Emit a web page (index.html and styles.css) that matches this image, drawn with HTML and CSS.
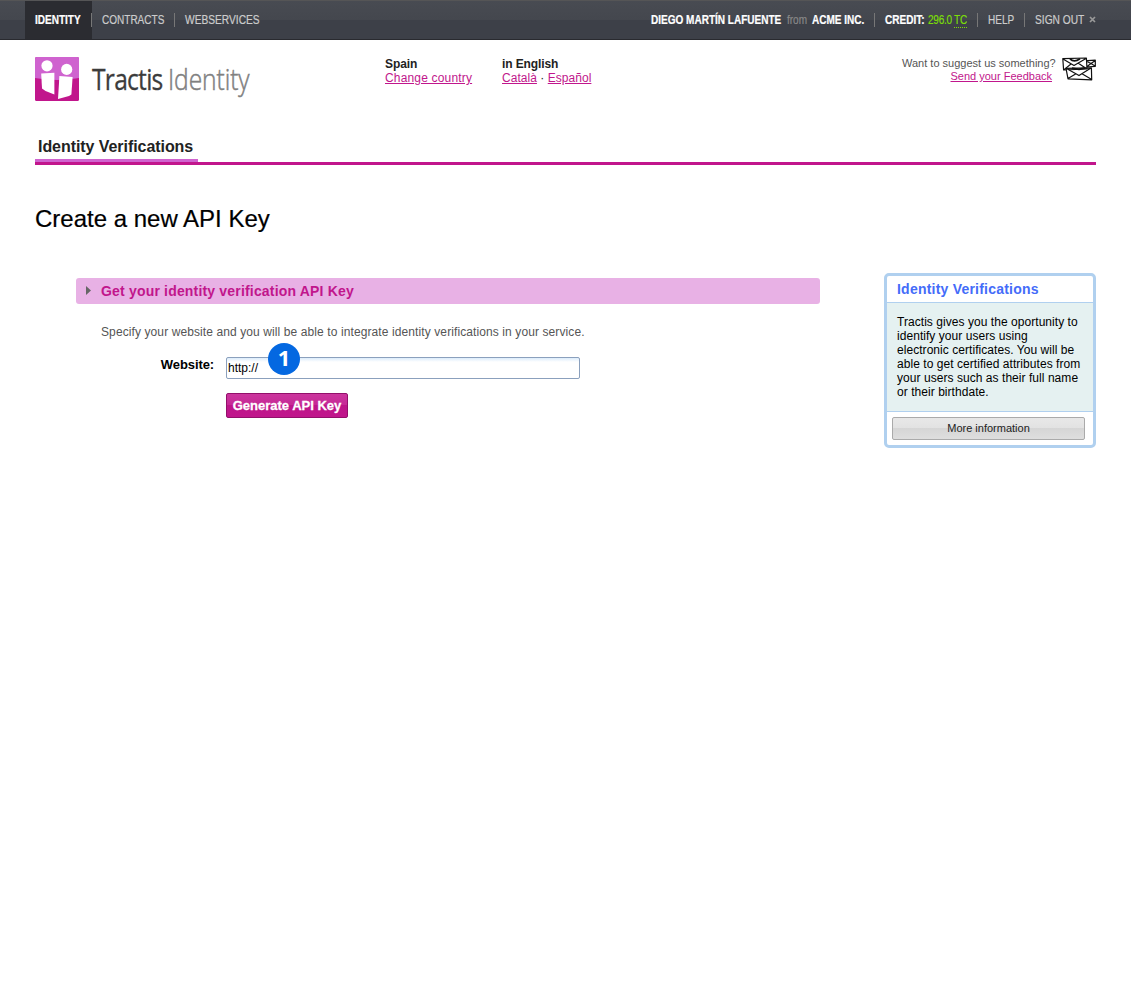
FILE: index.html
```html
<!DOCTYPE html>
<html lang="en">
<head>
<meta charset="utf-8">
<title>Tractis Identity</title>
<link rel="stylesheet" href="styles.css">
</head>
<body>
<div class="topbar">
  <nav class="nav">
    <a class="nav-item active"><span class="narrow">IDENTITY</span></a>
    <a class="nav-item contracts"><span class="narrow">CONTRACTS</span></a>
    <a class="nav-item webservices"><span class="narrow">WEBSERVICES</span></a>
  </nav>
  <div class="account">
    <span class="account-item user"><span class="name"><b class="narrow">DIEGO MARTÍN LAFUENTE</b></span><span class="from"><span class="narrow">from</span></span><b class="narrow">ACME INC.</b></span>
    <span class="account-item credit"><span class="credit-label"><b class="narrow">CREDIT:</b></span><span class="amount"><span class="narrow">296.0</span></span><span class="unit"><span class="narrow">TC</span></span></span>
    <span class="account-item help"><span class="narrow">HELP</span></span>
    <span class="account-item signout"><span class="signout-label"><span class="narrow">SIGN OUT</span></span><svg class="close" viewBox="0 0 7 7"><path d="M1 1L6 6M6 1L1 6"/></svg></span>
  </div>
</div>
<header class="header">
  <div class="brand">
    <svg class="logo" viewBox="0 0 44 44">
      <defs><clipPath id="tile"><rect width="44" height="44" rx="1.5"/></clipPath></defs>
      <g clip-path="url(#tile)">
        <rect width="44" height="44" fill="#c1168c"/>
        <path d="M0 0H44V21Q22 25 0 21Z" fill="#cf63cf"/>
      </g>
      <g fill="#fff">
        <circle cx="12" cy="8.8" r="5.6"/><circle cx="31.7" cy="12.4" r="5.6"/>
        <path d="M6.2 16.4L19.4 15.8V37.4L10.5 34L7 31.5Z"/>
        <path d="M24.4 19L37.6 20L36.4 37.6L34 39L23 42Z"/>
      </g>
    </svg>
    <div class="wordmark"><span class="word-dark">Tractis</span><span class="word-light">Identity</span></div>
  </div>
  <div class="locale country"><b>Spain</b><a>Change country</a></div>
  <div class="locale language"><b>in English</b><span><a>Català</a> · <a>Español</a></span></div>
  <div class="feedback"><span class="ask">Want to suggest us something?</span><a>Send your Feedback</a></div>
  <svg class="mail" viewBox="0 0 34 24" fill="#fff" stroke="#111" stroke-width="1.2" stroke-linejoin="round">
    <path d="M22 3.8L33.3 3.2V9.3L24 10ZM25 4.5L29 6.5L33 3.7M25 9.5L29 6.5L33 9"/>
    <path d="M.8 1.7L24.4 1L25 12L1.6 13ZM1 2L12 8.5L24 1.5M2 12.6L9 7M25 12L16 6"/>
    <path d="M8 1.8Q12 6 18 1.8" fill="none" stroke-width="1.8"/>
    <path d="M4 11.3L29.4 10.8L29.7 22.8L6 21.8ZM4.5 11.6L17 18.6L29 11M6 21.6L14 16.8M29.3 22.3L20 16.8"/>
    <path d="M10 11.2L17 12.4L23 11" fill="none" stroke-width="1.8"/>
  </svg>
</header>
<div class="tabs"><div class="tab">Identity Verifications</div></div>
<h1 class="title">Create a new API Key</h1>
<main class="content">
  <section class="main">
    <h2 class="section-title"><svg class="arrow" viewBox="0 0 5 9"><path d="M0 0L5 4.5L0 9Z"/></svg><span>Get your identity verification API Key</span></h2>
    <p class="intro">Specify your website and you will be able to integrate identity verifications in your service.</p>
    <form class="form">
      <label class="label" for="website">Website:</label>
      <div class="field">
        <input class="input" id="website" type="text" value="http://">
        <span class="marker">1</span>
      </div>
      <button class="generate" type="button">Generate API Key</button>
    </form>
  </section>
  <aside class="panel">
    <h3 class="panel-title">Identity Verifications</h3>
    <p class="panel-text">Tractis gives you the oportunity to<br>identify your users using<br>electronic certificates. You will be<br>able to get certified attributes from<br>your users such as their full name<br>or their birthdate.</p>
    <div class="panel-foot"><button class="more" type="button">More information</button></div>
  </aside>
</main>
</body>
</html>
```
FILE: styles.css
```css
* { box-sizing: border-box; }
body { margin: 0; background: #fff; color: #000; font: 12px/14px "Liberation Sans", Arial, sans-serif; }
h1, h2, h3, p { margin: 0; }
b { white-space: nowrap; }

.topbar { display: flex; justify-content: space-between; height: 40px; padding: 0 35px 0 25px; border-top: 1px solid #555556; border-bottom: 1px solid #292a2f; background: linear-gradient(#484b52 0, #44474e 19px, #3d4048 19px, #3d4048 100%); color: #ccc; font-size: 12px; line-height: 38px; white-space: nowrap; }
.narrow { display: inline-block; transform: scaleX(.835); transform-origin: 0 50%; -webkit-text-stroke: .2px; }
.nav, .account, .account-item { display: flex; }
.nav-item { padding-left: 10px; }
.active { width: 67px; background: #2b2c31 linear-gradient(#777, #777) right 12px / 1px 14px no-repeat; color: #fff; font-weight: bold; }
.contracts { width: 83px; background: linear-gradient(#777, #777) right 12px / 1px 14px no-repeat; }
.webservices .narrow { transform: scaleX(.85); }
.account-item { background: linear-gradient(#777, #777) right 12px / 1px 14px no-repeat; }
.account b { color: #fff; }
.user { width: 224px; }
.name { width: 136px; }
.from { width: 25px; color: #888; }
.credit { width: 103px; padding-left: 10px; color: #7bdc08; }
.credit-label { width: 43px; }
.amount { width: 26px; letter-spacing: -.3px; }
.unit { width: 13px; height: 15px; margin-top: 12px; border-bottom: 1px dotted #7bdc08; line-height: 15px; }
.help { width: 47px; padding-left: 10px; }
.signout { width: 71px; padding-left: 10px; background: none; align-items: center; }
.signout-label { width: 54px; }
.signout-label .narrow { transform: scaleX(.85); }
.close { flex: none; width: 7px; height: 7px; margin-top: -1px; stroke: #999; stroke-width: 1.7; }

.header { display: flex; height: 84px; padding: 17px 35px 0; line-height: 14px; }
.header a { color: #c1168c; text-decoration: underline; }
.brand { display: flex; width: 350px; }
.logo { width: 44px; height: 44px; }
.wordmark { display: flex; margin-left: 13px; font: 30px/44px "Open Sans", sans-serif; white-space: nowrap; }
.word-dark, .word-light { transform: scaleX(.82); transform-origin: 0 50%; }
.word-dark { width: 76px; color: #3c3c3c; letter-spacing: -.9px; -webkit-text-stroke: .3px; }
.word-light { color: #808080; font-weight: 300; letter-spacing: -.1px; -webkit-text-stroke: .5px; }
.locale { display: flex; flex-direction: column; color: #222; letter-spacing: .12px; }
.locale b { letter-spacing: -.1px; }
.country { width: 117px; }
.country a { letter-spacing: .17px; }
.language { width: 200px; letter-spacing: .04px; }
.feedback { display: flex; flex-direction: column; width: 153px; margin-left: auto; color: #555; font-size: 11px; line-height: 13px; white-space: nowrap; }
.feedback a { margin-right: 3px; text-align: right; }
.mail { width: 34px; height: 24px; margin-left: 7px; }

.tabs { display: flex; height: 41px; margin: 0 35px; border-bottom: 3px solid #c1168c; }
.tab { width: 163px; padding: 13px 0 0 3px; border-bottom: 3px solid #cf63cf; color: #222; font-size: 16px; line-height: 20px; font-weight: bold; white-space: nowrap; letter-spacing: -.06px; }
.title { margin: 39px 35px 0; font-size: 24px; line-height: 29px; font-weight: normal; -webkit-text-stroke: .2px; }

.content { display: flex; justify-content: space-between; align-items: flex-start; margin: 40px 35px 0 76px; }
.main { width: 744px; padding-top: 5px; }
.section-title { display: flex; align-items: center; height: 26px; padding-left: 10px; border-radius: 3px; background: #e8b1e5; color: #c1168c; font-size: 14px; letter-spacing: .18px; }
.arrow { width: 5px; height: 9px; margin: -1px 10px 0 0; fill: #666; }
.intro { margin: 21px 0 0 25px; color: #555; letter-spacing: .1px; }
.form { display: grid; grid-template-columns: 138px 354px; column-gap: 12px; row-gap: 14px; margin-top: 18px; }
.label { font-size: 13px; line-height: 15px; font-weight: bold; text-align: right; letter-spacing: -.1px; }
.field { position: relative; height: 22px; }
.input { display: block; width: 354px; height: 22px; padding: 1px; border: 1px solid #8ba0bd; border-radius: 2px; background: linear-gradient(#dcecfb, #fff 4px); color: #000; font: 12px "Liberation Sans", sans-serif; outline: 0; }
.marker { position: absolute; left: 42px; top: -14.5px; width: 32px; height: 32px; border-radius: 50%; background: #0468e1; color: #fff; font: bold 22px/28px "Open Sans", sans-serif; text-align: center; }
.generate { grid-column: 2; width: 122px; height: 25px; padding: 0; border: 1px solid #930f6b; border-radius: 2px; background: linear-gradient(#cb359d, #c62996 11px, #bd1589 11px, #c1168c); color: #fff; font: bold 13px "Liberation Sans", sans-serif; white-space: nowrap; -webkit-text-stroke: .3px; }

.panel { width: 212px; height: 175px; border: 3px solid #b0d0ef; border-radius: 5px; background: #fff; }
.panel-title { height: 27px; padding: 5px 10px 0; border-bottom: 1px solid #b0d0ef; color: #446cf9; font-size: 14px; line-height: 16px; letter-spacing: .22px; }
.panel-text { height: 109px; padding: 12px 10px 0; border-bottom: 1px solid #b0d0ef; background: #e5f1f1; white-space: nowrap; letter-spacing: .05px; }
.panel-foot { padding: 5px; }
.more { display: block; width: 193px; height: 23px; padding: 0 0 2px; border: 1px solid #aaa; border-radius: 2px; background: linear-gradient(#e8e8e8, #e2e2e2 10px, #d5d5d5 10px, #dedede); color: #222; font: 11px "Liberation Sans", sans-serif; }
```
